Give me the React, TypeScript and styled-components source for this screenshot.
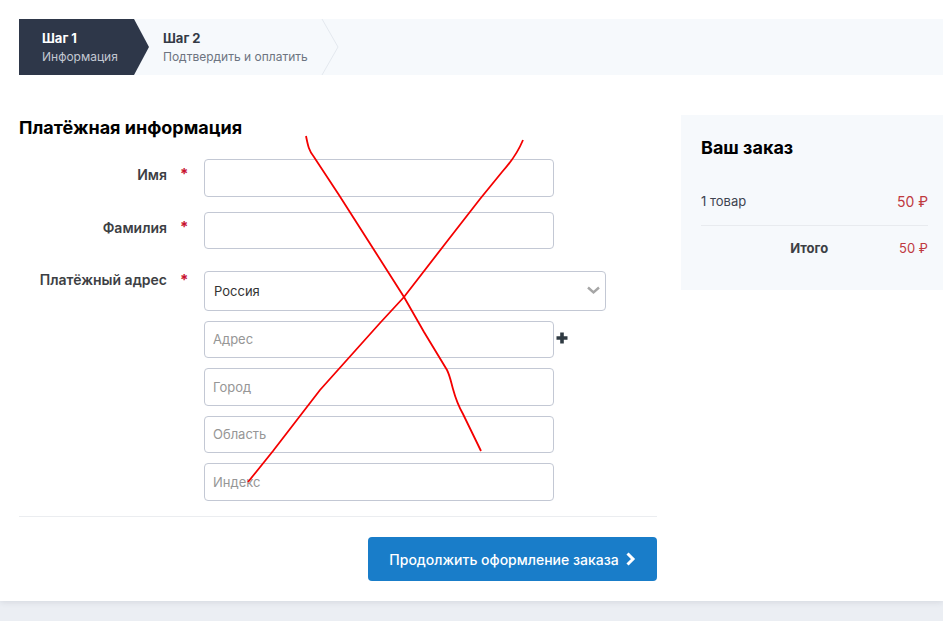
import React from "react";
import styled, { createGlobalStyle } from "styled-components";

const Global = createGlobalStyle`
  html, body { margin: 0; padding: 0; background: #ebeef3; }
  body { font-family: Inter, "Noto Sans", sans-serif; color: #333; overflow: hidden; }
  * { box-sizing: border-box; }
`;
const Page = styled.div`
  position: relative; width: 943px; height: 621px; overflow: hidden;
`;
const Card = styled.div`
  height: 601px; background: #fff; padding-top: 19px;
  box-shadow: 0 1px 6px rgba(40, 50, 70, 0.12);
`;
const Steps = styled.div`
  margin-left: 19px; height: 56px; display: flex; background: #f6f9fc;
`;
const StepOne = styled.div`
  width: 130px; height: 56px; padding: 11px 0 0 23px; background: #2e3749; color: #fff;
  clip-path: polygon(0 0, 115px 0, 130px 28px, 115px 56px, 0 56px);
`;
const StepTwo = styled.div`
  position: relative; width: 190px; height: 56px; padding: 11px 0 0 14px; color: #343a46;
`;
const StepEdge = styled.svg`
  position: absolute; right: 0; top: 0;
`;
const StepTitle = styled.div`
  font-size: 13px; line-height: 16px; font-weight: 700;
`;
const StepText = styled.div<{ $light?: boolean }>`
  font-size: 12px; line-height: 16px; margin-top: 3px; white-space: nowrap;
  color: ${(p) => (p.$light ? "#c3c8d2" : "#6d7480")};
`;
const Body = styled.div`
  display: flex; margin-top: 40px; padding-left: 19px;
`;
const Main = styled.div`
  width: 638px; flex: none;
`;
const Heading = styled.h2`
  margin: 2px 0 0; font-size: 18px; line-height: 22px; font-weight: 700; color: #000;
`;
const Row = styled.div<{ $h: number; $gap: number }>`
  display: flex; height: ${(p) => p.$h}px; margin-top: ${(p) => p.$gap}px;
`;
const Label = styled.label<{ $top?: number }>`
  width: 148px; flex: none; text-align: right; font-size: 14px; line-height: 16px;
  font-weight: 600; color: #3d3f44; padding-top: ${(p) => p.$top ?? 8}px;
`;
const Star = styled.span<{ $top?: number }>`
  width: 37px; flex: none; padding: ${(p) => p.$top ?? 7}px 0 0 13px; font-size: 15px; line-height: 16px;
  font-weight: 700; color: #c8102e;
`;
const Stack = styled.div`
  display: flex; flex-direction: column;
`;
const Input = styled.input<{ $h: number; $gap?: number }>`
  display: block; width: 350px; height: ${(p) => p.$h}px; margin-top: ${(p) => p.$gap || 0}px;
  border: 1px solid #c3c8d4; border-radius: 4px; background: #fff;
  padding: 0 8px ${(p) => (p.$h === 37 ? 1 : 0)}px 8px;
  font: 13px Inter, sans-serif; color: #333; outline: none;
  &::placeholder { color: #969696; opacity: 1; }
`;
const Select = styled.div`
  display: flex; align-items: center; justify-content: space-between; width: 402px; height: 40px;
  border: 1px solid #c3c8d4; border-radius: 4px; padding: 0 5px 0 9px; font-size: 13px; color: #333;
`;
const Chevron = styled.svg`
  margin-top: -2px; color: #a6a6a6;
`;
const AddressLine = styled.div`
  display: flex; align-items: flex-start; margin-top: 10px;
`;
const Plus = styled.svg`
  margin: 11px 0 0 2px; color: #2f3a42;
`;
const Divider = styled.hr`
  border: 0; border-top: 1px solid #ebedf0; margin: 15px 0 0;
`;
const Actions = styled.div`
  display: flex; justify-content: flex-end; margin-top: 20px;
`;
const Button = styled.button`
  display: flex; align-items: center; justify-content: center; gap: 6px; width: 289px; height: 44px;
  border: 0; border-radius: 4px; background: #197dc9; color: #fff;
  font: 500 14px Inter, sans-serif; padding: 0;
`;
const Aside = styled.aside`
  margin-left: 24px; width: 262px; height: 175px; background: #f6f9fc; padding: 22px 15px 0 20px;
`;
const AsideTitle = styled.h3`
  margin: 0; font-size: 18px; line-height: 22px; font-weight: 700; color: #000;
`;
const SumRow = styled.div`
  display: flex; align-items: center; justify-content: space-between; height: 46px;
  margin-top: 21px; padding-bottom: 3px; font-size: 13px; color: #3f4450;
  border-bottom: 1px solid #e8ebef;
`;
const TotalRow = styled.div`
  display: flex; align-items: center; justify-content: flex-end; height: 43px; font-size: 13px;
`;
const TotalLabel = styled.span`
  font-weight: 700; color: #3d3f44; margin-right: 71px;
`;
const Price = styled.span<{ $small?: boolean }>`
  font-size: ${(p) => (p.$small ? 13 : 14)}px; color: #bf3a3f; font-family: Inter, "DejaVu Sans", sans-serif;
`;
const Scribble = styled.svg`
  position: absolute; left: 0; top: 0; pointer-events: none;
`;

export default function App() {
  return (
    <Page>
      <Global />
      <Card>
        <Steps>
          <StepOne>
            <StepTitle>Шаг 1</StepTitle>
            <StepText $light>Информация</StepText>
          </StepOne>
          <StepTwo>
            <StepTitle>Шаг 2</StepTitle>
            <StepText>Подтвердить и оплатить</StepText>
            <StepEdge width="18" height="56" viewBox="0 0 18 56" fill="none">
              <path d="M1 0 L17 28 L1 56" stroke="#e4e8ee" strokeWidth="1" />
            </StepEdge>
          </StepTwo>
        </Steps>
        <Body>
          <Main>
            <Heading>Платёжная информация</Heading>
            <Row $h={38} $gap={20}>
              <Label>Имя</Label>
              <Star>*</Star>
              <Input $h={38} />
            </Row>
            <Row $h={37} $gap={15}>
              <Label>Фамилия</Label>
              <Star>*</Star>
              <Input $h={37} />
            </Row>
            <Row $h={230} $gap={22}>
              <Label $top={1}>Платёжный адрес</Label>
              <Star $top={1}>*</Star>
              <Stack>
                <Select>
                  Россия
                  <Chevron width="16" height="16" viewBox="0 0 16 16" fill="none">
                    <path d="M4 5.5 L9.5 10.5 L15 5.5" stroke="currentColor" strokeWidth="2.4" />
                  </Chevron>
                </Select>
                <AddressLine>
                  <Input $h={37} placeholder="Адрес" />
                  <Plus width="12" height="12" viewBox="0 0 12 12">
                    <path d="M4.2 0.5 H7.8 V4.2 H11.5 V7.8 H7.8 V11.5 H4.2 V7.8 H0.5 V4.2 H4.2 Z" fill="currentColor" />
                  </Plus>
                </AddressLine>
                <Input $h={38} $gap={10} placeholder="Город" />
                <Input $h={37} $gap={10} placeholder="Область" />
                <Input $h={38} $gap={10} placeholder="Индекс" />
              </Stack>
            </Row>
            <Divider />
            <Actions>
              <Button>
                Продолжить оформление заказа
                <svg width="11" height="14" viewBox="0 0 11 14" fill="none">
                  <path d="M2.5 1.5 L8 7 L2.5 12.5" stroke="currentColor" strokeWidth="3" />
                </svg>
              </Button>
            </Actions>
          </Main>
          <Aside>
            <AsideTitle>Ваш заказ</AsideTitle>
            <SumRow>
              <span>1 товар</span>
              <Price>50 ₽</Price>
            </SumRow>
            <TotalRow>
              <TotalLabel>Итого</TotalLabel>
              <Price $small>50 ₽</Price>
            </TotalRow>
          </Aside>
        </Body>
      </Card>
      <Scribble width="943" height="621" viewBox="0 0 943 621" fill="none">
        <path
          d="M306 136 C308 146 309 151 314 157 L339 195 L376 253 L404 297 L424 332 L447 370 C450 376 451 382 453 389 C456 400 459 407 463 414 L481 451"
          stroke="#f40000" strokeWidth="1.8"
        />
        <path
          d="M523 140 C518 152 512 161 502 172 L480 199 L445 244 L404 297 L380 323 L320 390 L273 451 L248 482"
          stroke="#f40000" strokeWidth="1.8"
        />
      </Scribble>
    </Page>
  );
}
